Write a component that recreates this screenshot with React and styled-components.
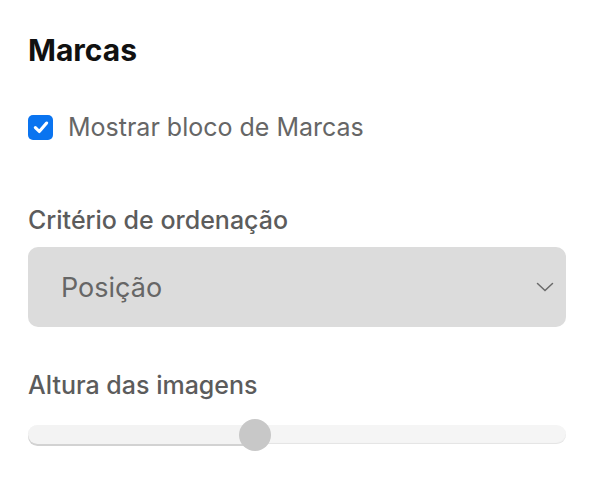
import styled, { createGlobalStyle } from "styled-components";

const GlobalStyle = createGlobalStyle`
    body{
        margin: 0;
        background: #ffffff;
        font-family: Inter, "Noto Sans", sans-serif;
    }
`;

const Panel = styled.div`
    width: 592px;
    height: 488px;
    box-sizing: border-box;
    padding: 34px 26px 0px 28px;
    display: flex;
    flex-direction: column;
`;

const Title = styled.h2`
    margin: 0;
    font-size: 30px;
    line-height: 32px;
    font-weight: 700;
    color: #111111;
`;

const CheckRow = styled.label`
    display: flex;
    align-items: center;
    gap: 15px;
    margin-top: 47px;
    font-size: 25px;
    line-height: 28px;
    color: #666666;
`;

const CheckBox = styled.span`
    width: 25px;
    height: 25px;
    border-radius: 5px;
    background: #0a74f0;
    display: flex;
    align-items: center;
    justify-content: center;
`;

const FieldLabel = styled.div`
    font-size: 25px;
    line-height: 28px;
    font-weight: 500;
    color: #5c5c5c;
    margin-top: ${ props => props.top }px;
`;

const Select = styled.div`
    margin-top: 13px;
    height: 80px;
    border-radius: 10px;
    background: #dcdcdc;
    display: flex;
    align-items: center;
    justify-content: space-between;
    padding: 0px 12px 0px 33px;
    font-size: 27px;
    color: #666666;
`;

const Slider = styled.div`
    position: relative;
    margin-top: 26px;
    height: 19px;
    border-radius: 10px;
    background: #f5f5f5;
    box-shadow: inset 0px -1px 1px #e4e4e4;
`;

const SliderFill = styled.div`
    height: 100%;
    border-radius: 10px 0px 0px 10px;
    background: #f3f3f3;
    box-shadow: 0px 2px 0px #d2d2d2;
`;

const Thumb = styled.span`
    position: absolute;
    top: 50%;
    width: 32px;
    height: 32px;
    border-radius: 50%;
    background: #c8c8c8;
    transform: translate(-50%, -50%);
`;

export default function App(){
    const value = 227 / 538;

    return(
        <>
            <GlobalStyle />
            <Panel>
                <Title>Marcas</Title>
                <CheckRow>
                    <CheckBox>
                        <svg width="18" height="18" viewBox="0 0 16 16">
                            <path d="M3 8.5 L6.5 12 L13 4.5" fill="none" stroke="#fff" strokeWidth="2.8" strokeLinecap="round" strokeLinejoin="round"/>
                        </svg>
                    </CheckBox>
                    Mostrar bloco de Marcas
                </CheckRow>

                <FieldLabel top={ 65 }>Critério de ordenação</FieldLabel>
                <Select>
                    Posição
                    <svg width="18" height="10" viewBox="0 0 18 10">
                        <path d="M1.5 1.5 L9 8.5 L16.5 1.5" fill="none" stroke="#6a6a6a" strokeWidth="1.5" strokeLinecap="round"/>
                    </svg>
                </Select>

                <FieldLabel top={ 44 }>Altura das imagens</FieldLabel>
                <Slider>
                    <SliderFill style={{ width: `${ value * 100 }%` }} />
                    <Thumb style={{ left: `${ value * 100 }%` }} />
                </Slider>
            </Panel>
        </>
    );
}
